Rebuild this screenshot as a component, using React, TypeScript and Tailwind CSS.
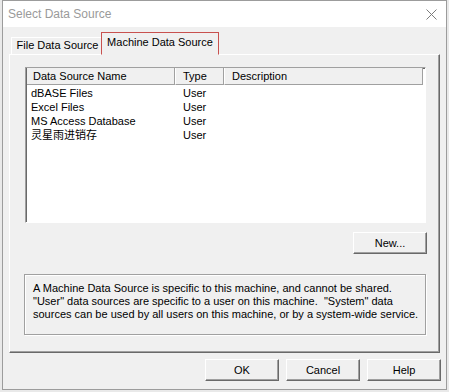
import React from 'react';

const raised = 'border border-t-white border-l-white border-r-[#696969] border-b-[#696969] shadow-[inset_-1px_-1px_0_#a0a0a0]';

const Button: React.FC<{ label: string; className?: string }> = ({ label, className = '' }) => (
    <button className={`w-[74px] h-[22px] bg-[#f0f0f0] text-black text-[11px] leading-none ${raised} ${className}`}>
        {label}
    </button>
);

const rows = [
    { name: 'dBASE Files', type: 'User' },
    { name: 'Excel Files', type: 'User' },
    { name: 'MS Access Database', type: 'User' },
    { name: '灵星雨进销存', type: 'User' },
];

const App: React.FC = () => {
    return (
        <div className="w-[449px] h-[392px] bg-[#e9e9e9] pl-[2px] font-['Liberation_Sans','Noto_Sans_CJK_SC',sans-serif] text-[11px] text-black">
            <div className="w-[445px] h-[390px] border border-[#9c9c9c] bg-[#f0f0f0] flex flex-col">
                {/* title bar */}
                <div className="h-[26px] bg-white flex items-center justify-between pl-[5px] pr-[8px] shrink-0">
                    <span className="text-[12px] text-[#9a9a9a]">Select Data Source</span>
                    <svg width="11" height="11" viewBox="0 0 11 11" className="mr-[1px]">
                        <path d="M0.5 0.5 L10.5 10.5 M10.5 0.5 L0.5 10.5" stroke="#7c7c7c" strokeWidth="1" fill="none" />
                    </svg>
                </div>

                <div className="px-[6px] flex flex-col">
                    {/* tabs */}
                    <div className="h-[27px] flex items-end pl-[2px] relative z-10">
                        <div className="h-[17px] w-[90px] border-t border-l border-t-white border-l-white flex items-center justify-center pl-[2px] pb-[1px]">
                            File Data Source
                        </div>
                        <div className="h-[23px] w-[118px] bg-[#f0f0f0] border border-[#c8514f] border-b-[#f0f0f0] mb-[-1px] flex items-center justify-center pb-[2px]">
                            Machine Data Source
                        </div>
                    </div>

                    {/* panel */}
                    <div className={`h-[299px] bg-[#f0f0f0] pt-[12px] pl-[15px] pr-[13px] flex flex-col ${raised}`}>
                        <div className="h-[156px] bg-white border border-t-[#a0a0a0] border-l-[#a0a0a0] border-r-white border-b-white shadow-[inset_1px_1px_0_#696969] pl-[1px]">
                            <div className="flex h-[17px]">
                                <div className="w-[148px] bg-[#f0f0f0] border-r border-b border-r-[#a0a0a0] border-b-[#a0a0a0] pl-[6px] flex items-center">Data Source Name</div>
                                <div className="w-[49px] bg-[#f0f0f0] border-r border-b border-l border-l-white border-r-[#a0a0a0] border-b-[#a0a0a0] pl-[7px] flex items-center">Type</div>
                                <div className="w-[199px] bg-[#f0f0f0] border-r border-b border-l border-l-white border-r-[#a0a0a0] border-b-[#a0a0a0] pl-[7px] flex items-center">Description</div>
                            </div>
                            <div className="pt-[1px]">
                                {rows.map(r => (
                                    <div key={r.name} className="flex h-[14px] items-center">
                                        <div className="w-[148px] pl-[4px] whitespace-nowrap">{r.name}</div>
                                        <div className="w-[49px] pl-[8px]">{r.type}</div>
                                    </div>
                                ))}
                            </div>
                        </div>

                        <div className="flex justify-end mt-[9px] mr-[-1px]">
                            <Button label="New..." />
                        </div>

                        <div className="mt-[20px] ml-[-1px] h-[61px] border border-[#a0a0a0] shadow-[inset_1px_1px_0_white,1px_1px_0_white] pl-[8px] pt-[7px] leading-[13px]">
                            <div>A Machine Data Source is specific to this machine, and cannot be shared.</div>
                            <div>"User" data sources are specific to a user on this machine.&nbsp; "System" data</div>
                            <div>sources can be used by all users on this machine, or by a system-wide service.</div>
                        </div>
                    </div>

                    {/* bottom buttons */}
                    <div className="flex justify-end gap-[7px] mt-[6px] mr-[-1px]">
                        <Button label="OK" />
                        <Button label="Cancel" />
                        <Button label="Help" />
                    </div>
                </div>
            </div>
        </div>
    );
};

export default App;
